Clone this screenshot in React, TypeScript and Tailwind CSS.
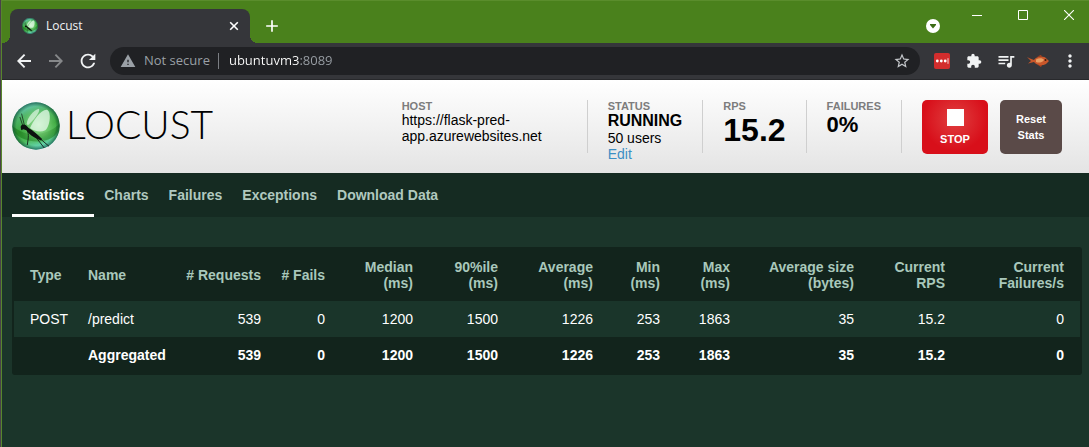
import React from "react";
import {
  MdAdd,
  MdExtension,
  MdMoreVert,
  MdQueueMusic,
  MdRefresh,
  MdStarOutline,
  MdWarning,
} from "react-icons/md";

function LocustMark({ id, className }: { id: string; className: string }) {
  return (
    <svg viewBox="12 16 144 144" className={className} aria-hidden="true">
      <defs>
        <linearGradient id={`${id}-base`} x1="0.3" y1="0" x2="0.6" y2="1">
          <stop offset="0" stopColor="#6fd0cc" />
          <stop offset="0.25" stopColor="#4fb46c" />
          <stop offset="0.55" stopColor="#3aa63c" />
          <stop offset="0.75" stopColor="#4dbb5c" />
          <stop offset="1" stopColor="#6fe0d8" />
        </linearGradient>
        <radialGradient id={`${id}-glow`} cx="0.55" cy="0.5" r="0.5">
          <stop offset="0" stopColor="#b9ecb4" stopOpacity="0.9" />
          <stop offset="0.6" stopColor="#7fd57a" stopOpacity="0.5" />
          <stop offset="1" stopColor="#4fb450" stopOpacity="0" />
        </radialGradient>
        <radialGradient id={`${id}-edge`} cx="0.5" cy="0.5" r="0.5">
          <stop offset="0.82" stopColor="#0c4a1c" stopOpacity="0" />
          <stop offset="1" stopColor="#0b4a38" stopOpacity="0.7" />
        </radialGradient>
      </defs>
      <circle cx="84" cy="88" r="71" fill={`url(#${id}-base)`} />
      <path d="M13 88 C40 110 70 116 92 112 C116 108 140 98 155 80 C156 112 132 130 98 134 C56 136 18 122 13 88Z" fill="#156f14" opacity="0.5" />
      <circle cx="86" cy="84" r="60" fill={`url(#${id}-glow)`} />
      <circle cx="84" cy="88" r="71" fill={`url(#${id}-edge)`} />
      <path d="M56 82 C58 62 76 40 93 36 C98 46 76 70 60 86Z" fill="#dff6e4" opacity="0.7" />
      <path d="M66 94 C76 72 96 40 116 39 C130 42 128 84 112 101 C98 108 78 104 66 94Z" fill="#e6f9ea" opacity="0.75" />
      <path d="M38 92 C38 84 46 81 54 86 L62 94 C76 102 90 114 103 128 L98 131 L90 128 C76 122 62 112 55 101 L46 98 L40 101Z" fill="#0d120f" />
      <g fill="none" stroke="#0d120f" strokeLinecap="round">
        <path d="M44 86 L36 62" strokeWidth="2" />
        <path d="M49 85 L41 52" strokeWidth="2" />
        <path d="M58 102 C64 114 60 128 58 144" strokeWidth="2.5" />
        <path d="M84 122 L108 153" strokeWidth="2.5" />
        <path d="M94 124 L122 148" strokeWidth="2.5" />
      </g>
    </svg>
  );
}

function Fish() {
  return (
    <svg viewBox="0 0 22 12" className="h-3 w-[22px]" aria-hidden="true">
      <path d="M0 2 L3 3.4 L7 5 C9 1.4 14 .6 18 2.2 L22 6 L19 9 C15 11 10 10.6 7 7 L1 8.6 L4 6Z" fill="#c9572a" />
      <path d="M9 4.5 C12 2.5 16 3 17 5 C15 8 11 8 9 7Z" fill="#e9a065" />
      <path d="M10 1.6 L14 0 L15 1.8Z M11 10 L14 12 L15 10Z" fill="#b2431c" />
      <circle cx="18.5" cy="5" r="1" fill="#3c1b0e" />
    </svg>
  );
}

function PasswordBadge() {
  return (
    <span className="flex h-4 w-4 items-center justify-center rounded-xs bg-[#d22d2d]">
      <svg viewBox="0 0 16 16" className="h-4 w-4" aria-hidden="true">
        <circle cx="3.3" cy="8" r="1.4" fill="#fff" />
        <circle cx="7.3" cy="8" r="1.4" fill="#fff" />
        <circle cx="11.2" cy="8" r="1.4" fill="#fff" />
        <path d="M14 5.2V10.8" stroke="#fff" strokeWidth="0.8" />
      </svg>
    </span>
  );
}

function ToolButton({ label, children }: { label: string; children: React.ReactNode }) {
  return (
    <button type="button" aria-label={label} className="flex h-7 w-8 shrink-0 items-center justify-center text-[#f1f3f4]">
      {children}
    </button>
  );
}

function TabStrip() {
  return (
    <div className="flex h-[43px] items-end border-t border-[#5a8d2c] bg-[#4a811c] text-white">
      <span className="h-2 w-2 bg-[radial-gradient(circle_at_top_left,transparent_8px,#35363a_8px)]" />
      <div className="flex h-[34px] w-60 items-center rounded-t-lg bg-[#35363a] pr-2 pl-3">
        <LocustMark id="tab" className="h-4 w-4" />
        <span className="ml-2 flex-1 text-xs text-[#f1f3f4]">Locust</span>
        <button type="button" aria-label="Close tab" className="flex h-4 w-4 items-center justify-center">
          <svg viewBox="0 0 10 10" className="h-2.5 w-2.5"><path d="M1.2 1.2L8.8 8.8M8.8 1.2L1.2 8.8" stroke="#fff" strokeWidth="1.6" /></svg>
        </button>
      </div>
      <span className="h-2 w-2 bg-[radial-gradient(circle_at_top_right,transparent_8px,#35363a_8px)]" />
      <button type="button" aria-label="New tab" className="ml-1 flex h-[34px] w-5 items-center justify-center">
        <MdAdd className="h-5 w-5 shrink-0" />
      </button>
      <div className="flex-1" />
      <button type="button" aria-label="Search tabs" className="mr-[17px] flex h-[34px] items-center">
        <svg viewBox="0 0 14 14" className="h-3.5 w-3.5">
          <circle cx="7" cy="7" r="7" fill="#fff" />
          <path d="M4 5H10V6L7 9.4L4 6Z" fill="#3c6b16" />
        </svg>
      </button>
      <div className="flex self-start">
        <button type="button" aria-label="Minimize" className="flex h-7 w-10 items-center justify-center">
          <svg viewBox="0 0 10 10" className="h-2.5 w-2.5"><path d="M0 5.5H10" stroke="#fff" /></svg>
        </button>
        <button type="button" aria-label="Maximize" className="flex h-7 w-[52px] items-center justify-center">
          <svg viewBox="0 0 10 10" className="h-2.5 w-2.5"><path d="M.5 .5H9.5V9.5H.5Z" fill="none" stroke="#fff" /></svg>
        </button>
        <button type="button" aria-label="Close" className="flex h-7 w-10 items-center justify-center">
          <svg viewBox="0 0 10 10" className="h-2.5 w-2.5"><path d="M0 0L10 10M10 0L0 10" stroke="#fff" strokeWidth="1.1" /></svg>
        </button>
      </div>
    </div>
  );
}

function Toolbar() {
  return (
    <div className="flex h-[37px] items-center border-b border-[#28292c] bg-[#35363a] pr-[3px] pl-1.5">
      <ToolButton label="Back">
        <svg viewBox="0 0 14 14" className="h-3.5 w-3.5" fill="none" stroke="currentColor" strokeWidth="1.9">
          <path d="M14 7H1.5M7.6 .7L1.3 7L7.6 13.3" />
        </svg>
      </ToolButton>
      <ToolButton label="Forward">
        <svg viewBox="0 0 14 14" className="h-3.5 w-3.5 text-[#86888a]" fill="none" stroke="currentColor" strokeWidth="1.9">
          <path d="M0 7H12.5M6.4 .7L12.7 7L6.4 13.3" />
        </svg>
      </ToolButton>
      <ToolButton label="Reload"><MdRefresh className="h-[22px] w-[22px]" /></ToolButton>
      <div className="mx-1.5 flex h-7 flex-1 items-center rounded-full bg-[#202124] pr-[9px] pl-2.5 text-[13px]">
        <MdWarning className="h-4 w-4 text-[#9aa0a6]" />
        <label htmlFor="address" className="ml-2 text-[#9aa0a6]">Not secure</label>
        <span className="mr-2.5 ml-2 h-4 w-px bg-[#7b7e83]" />
        <input
          id="address"
          type="text"
          defaultValue="ubuntuvm3:8089"
          className="min-w-0 flex-1 bg-[linear-gradient(90deg,#ffffff_70px,#9aa0a6_70px)] bg-clip-text text-transparent outline-none"
        />
        <button type="button" aria-label="Bookmark" className="text-[#c4c7cb]">
          <MdStarOutline className="h-[18px] w-[18px]" />
        </button>
      </div>
      <ToolButton label="Passwords"><PasswordBadge /></ToolButton>
      <ToolButton label="Extensions"><MdExtension className="h-4 w-4" /></ToolButton>
      <ToolButton label="Media"><MdQueueMusic className="h-5 w-5" /></ToolButton>
      <ToolButton label="Profile"><Fish /></ToolButton>
      <ToolButton label="Menu"><MdMoreVert className="h-5 w-5" /></ToolButton>
    </div>
  );
}

function Metric({ label, children, className = "" }: { label: string; children: React.ReactNode; className?: string }) {
  return (
    <div className={`h-[53px] border-r border-[#cfcfcf] px-5 ${className}`}>
      <div className="text-[11px] leading-3 font-bold text-[#7d7d7d]">{label}</div>
      {children}
    </div>
  );
}

function Header() {
  return (
    <header className="flex h-[93px] items-start bg-linear-to-b from-white to-[#e4e4e4] pt-5 pr-[27px] pl-2.5 text-sm leading-4 text-black">
      <a href="#" className="flex h-[52px] items-center">
        <LocustMark id="brand" className="h-12 w-12" />
        <span className="ml-1.5 pb-1 font-[Lato] text-[39px] leading-10 font-light">LOCUST</span>
      </a>
      <div className="flex-1" />
      <Metric label="HOST" className="w-[206px]">https://flask-pred-app.azurewebsites.net</Metric>
      <Metric label="STATUS">
        <div className="text-base leading-[18px] font-bold">RUNNING</div>
        <div>50 users</div>
        <a href="#" className="block text-[#3c8fc4]">Edit</a>
      </Metric>
      <Metric label="RPS"><div className="text-[32px] leading-9 font-bold">15.2</div></Metric>
      <Metric label="FAILURES"><div className="text-[22px] leading-[26px] font-bold">0%</div></Metric>
      <button type="button" className="ml-5 flex h-[54px] w-[66px] flex-col items-center rounded-[5px] bg-[radial-gradient(circle_at_50%_35%,#e04040_0,#d80f1a_32px)] pt-[9px] text-[11px] font-bold text-white">
        <span className="mb-[5px] h-[17px] w-[17px] bg-white" />
        STOP
      </button>
      <button type="button" className="ml-3 h-[54px] w-[62px] rounded-[5px] bg-[#5a4a48] px-3 text-[11px] leading-4 font-bold text-white">
        Reset Stats
      </button>
    </header>
  );
}

const tabs = ["Statistics", "Charts", "Failures", "Exceptions", "Download Data"];

function Navigation() {
  return (
    <nav className="flex h-11 bg-[#152b22] pl-2.5 text-sm font-bold">
      {tabs.map((tab, i) => (
        <a
          key={tab}
          href="#"
          className={`flex items-center border-b-[3px] px-2.5 pt-0.5 ${i === 0 ? "border-white text-white" : "border-transparent text-[#b0c8bf]"}`}
        >
          {tab}
        </a>
      ))}
    </nav>
  );
}

const columns = [
  { head: ["Type"], width: "w-[64px]" },
  { head: ["Name"], width: "w-[97px]" },
  { head: ["# Requests"], width: "w-[96px]" },
  { head: ["# Fails"], width: "w-[64px]" },
  { head: ["Median", "(ms)"], width: "w-[88px]" },
  { head: ["90%ile", "(ms)"], width: "w-[85px]" },
  { head: ["Average", "(ms)"], width: "w-[95px]" },
  { head: ["Min", "(ms)"], width: "w-[67px]" },
  { head: ["Max", "(ms)"], width: "w-[70px]" },
  { head: ["Average size", "(bytes)"], width: "w-[124px]" },
  { head: ["Current", "RPS"], width: "w-[91px]" },
  { head: ["Current", "Failures/s"], width: "w-[125px]" },
];

const rows = [
  ["POST", "/predict", "539", "0", "1200", "1500", "1226", "253", "1863", "35", "15.2", "0"],
  ["", "Aggregated", "539", "0", "1200", "1500", "1226", "253", "1863", "35", "15.2", "0"],
];

function StatsTable() {
  return (
    <div className="mt-[30px] mr-[7px] ml-2.5 rounded-[3px] bg-[#12241c] p-0.5">
      <table className="w-full table-fixed text-sm leading-4 whitespace-nowrap text-white">
        <colgroup>
          {columns.map((c, i) => <col key={i} className={c.width} />)}
        </colgroup>
        <thead className="text-[#a9c8bb]">
          <tr className="h-[52px]">
            {columns.map((c, i) => (
              <th key={i} scope="col" className={`px-2.5 first:pl-4 last:pr-4 ${i < 2 ? "text-left" : "text-right"}`}>
                {c.head.map((line) => <span key={line} className="block">{line}</span>)}
              </th>
            ))}
          </tr>
        </thead>
        <tbody>
          {rows.map((row, r) => (
            <tr key={r} className={r === 0 ? "h-9 bg-[#1a352a]" : "h-9 font-bold"}>
              {row.map((cell, i) => (
                <td key={i} className={`px-2.5 first:pl-4 last:pr-4 ${i < 2 ? "text-left" : "text-right"}`}>{cell}</td>
              ))}
            </tr>
          ))}
        </tbody>
      </table>
    </div>
  );
}

export default function App() {
  return (
    <div className="min-h-screen border-l border-[#494149] bg-[#1b352a]">
      <div className="min-h-screen border-l border-[#57862c]">
        <div className="font-['Open_Sans',sans-serif]">
          <TabStrip />
          <Toolbar />
        </div>
        <main className="font-['Liberation_Sans',Arial,sans-serif]">
          <Header />
          <Navigation />
          <StatsTable />
        </main>
      </div>
    </div>
  );
}
